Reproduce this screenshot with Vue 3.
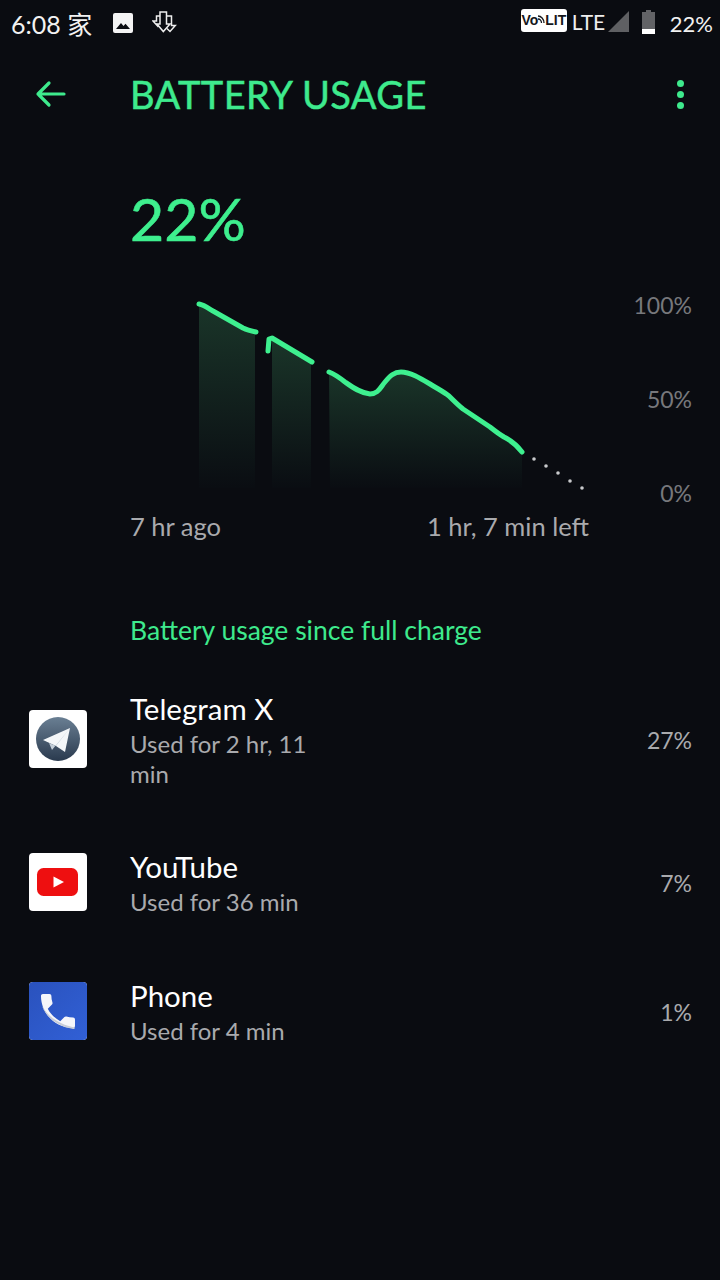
<script setup>
const apps = [
  { name: 'Telegram X', used: 'Used for 2 hr, 11 min', pct: '27%', icon: 'telegram', tall: true },
  { name: 'YouTube', used: 'Used for 36 min', pct: '7%', icon: 'youtube' },
  { name: 'Phone', used: 'Used for 4 min', pct: '1%', icon: 'phone' }
]
const seg3 = 'M329 371C334 373 340 377 345 381C352 386 360 392 370 393C378 393 380 387 385 381C390 375 394 371 401 371C410 371 420 377 430 383C438 388 444 391 449 395C454 400 458 404 463 408L490 426C495 430 499 433 504 436C510 439 516 443 522 451'
</script>

<template>
  <div class="screen">
    <header class="status">
      <div class="status-left">
        <span class="time">6:08 家</span>
        <svg class="s-img" width="22" height="22" viewBox="0 0 22 22">
          <rect x="1" y="1" width="20" height="20" rx="2" fill="#f4f4f4" />
          <path d="M4 17l5-6 2.500 3 2-2.200L18 17z" fill="#0b0d12" />
        </svg>
        <svg class="s-dl" width="25" height="22" viewBox="0 0 25 22" fill="none" stroke="#eee" stroke-width="1.500" stroke-linejoin="miter">
          <path d="M8 1h6.500v12h3.500L11.300 20.500 5 13h3z" />
          <path d="M8 5H4.500v5H1l5.500 6" />
          <path d="M14.500 5h5v9.500h3.800L18 20.500 15 17.500" />
        </svg>
      </div>
      <div class="status-right">
        <span class="volte">Vo<svg width="7" height="9" viewBox="0 0 7 9" fill="none" stroke="#15171b" stroke-width="1.300"><path d="M0 1c3 0 6 3 6 7M0 4c2 0 3.500 2 3.500 4" /></svg>LIT</span>
        <span class="lte">LTE</span>
        <svg class="s-sig" width="21" height="21" viewBox="0 0 21 21"><path d="M0 21L21 0v21z" fill="#5f6063" /></svg>
        <svg class="s-bat" width="13" height="24" viewBox="0 0 13 24">
          <path d="M4 0h5v2h4v22H0V2h4z" fill="#626366" />
          <rect y="19" width="13" height="5" fill="#fff" />
        </svg>
        <span class="s-pct">22%</span>
      </div>
    </header>

    <nav class="toolbar">
      <svg class="back" width="32" height="32" viewBox="0 0 32 32" fill="none" stroke="#3eea8d" stroke-width="3.200" stroke-linecap="round" stroke-linejoin="round">
        <path d="M3 16h26M14 5L3 16l11 11" />
      </svg>
      <h1 class="title">BATTERY USAGE</h1>
      <div class="dots"><i></i><i></i><i></i></div>
    </nav>

    <section class="summary">
      <div class="big">22%</div>
      <div class="chart-wrap">
        <svg class="chart" width="460" height="210" viewBox="130 290 460 210">
          <defs>
            <linearGradient id="fade" x1="0" y1="0" x2="0" y2="1">
              <stop offset="0" stop-color="#1a3529" />
              <stop offset="1" stop-color="#0a0d12" />
            </linearGradient>
          </defs>
          <path d="M199 304L213 310L243 327L255 331V487H199z" fill="url(#fade)" />
          <path d="M272 338L311 361V487H272z" fill="url(#fade)" />
          <path :d="seg3 + 'V487H330z'" fill="url(#fade)" />
          <g fill="none" stroke="#3ef08f" stroke-width="5" stroke-linecap="round" stroke-linejoin="round">
            <path d="M199 303C204 304 208 307 213 310L243 327C247 329 251 330 256 331" />
            <path d="M268 350L269 338L272 337L312 361" />
            <path :d="seg3" />
          </g>
          <g fill="#c9cacc">
            <circle cx="534" cy="458" r="1.800" /><circle cx="546" cy="465" r="1.800" /><circle cx="558" cy="472" r="1.800" /><circle cx="570" cy="480" r="1.800" /><circle cx="582" cy="487" r="1.800" />
          </g>
        </svg>
        <div class="axis"><span>100%</span><span>50%</span><span>0%</span></div>
      </div>
      <div class="range"><span>7 hr ago</span><span>1 hr, 7 min left</span></div>
    </section>

    <h2 class="section">Battery usage since full charge</h2>

    <section class="list">
      <div v-for="a in apps" :key="a.name" class="row" :class="{ tall: a.tall }">
        <div class="app-icon" :class="a.icon">
          <svg v-if="a.icon === 'telegram'" width="58" height="58" viewBox="0 0 58 58">
            <defs>
              <linearGradient id="tg" x1="0" y1="0" x2="0" y2="1">
                <stop offset="0" stop-color="#6a7f93" />
                <stop offset="1" stop-color="#2a3a4e" />
              </linearGradient>
            </defs>
            <circle cx="29" cy="29" r="22" fill="url(#tg)" />
            <path d="M14 30L41 18L36 42L27 36z" fill="#f4f7f9" />
            <path d="M20 33L27 36L41 18L23 40z" fill="#c3ced8" />
          </svg>
          <svg v-else-if="a.icon === 'youtube'" width="58" height="58" viewBox="0 0 58 58">
            <rect x="8" y="15" width="41" height="28" rx="6.500" fill="#ee0f10" />
            <path d="M24.500 23.500L35 29L24.500 34.500z" fill="#fff" />
          </svg>
          <svg v-else width="58" height="58" viewBox="0 0 58 58">
            <defs>
              <linearGradient id="ph" x1="0" y1="0" x2="1" y2="1">
                <stop offset="0" stop-color="#2a52bd" />
                <stop offset="1" stop-color="#3160d6" />
              </linearGradient>
            </defs>
            <rect width="58" height="58" fill="url(#ph)" />
            <path transform="translate(6.300 6.300) scale(1.890)" d="M6.620 10.790c1.440 2.830 3.760 5.140 6.590 6.590l2.200-2.200c.27-.27.67-.36 1.020-.24 1.120.37 2.330.57 3.570.57.550 0 1 .45 1 1V20c0 .55-.45 1-1 1-9.390 0-17-7.610-17-17 0-.55.45-1 1-1h3.500c.55 0 1 .45 1 1 0 1.250.2 2.450.57 3.570.11.350.03.740-.25 1.020l-2.200 2.200z" fill="#f5f6fa" />
            <path d="M13 24C17 35 28 44 44 47C45 47 46 46.500 46 45.500C32 43 20 36 13 24z" fill="#c8cdd8" />
          </svg>
        </div>
        <div class="text">
          <div class="name">{{ a.name }}</div>
          <div class="used">{{ a.used }}</div>
        </div>
        <div class="pct">{{ a.pct }}</div>
      </div>
    </section>
  </div>
</template>

<style>
html, body { margin: 0; background: #0a0c11; }
</style>

<style scoped>
.screen {
  width: 720px;
  height: 1280px;
  overflow: hidden;
  background: #0a0c11;
  font-family: Lato, "Noto Sans CJK SC", sans-serif;
  color: #fff;
}
.status {
  height: 46px;
  display: flex;
  align-items: center;
  justify-content: space-between;
  padding: 0 7px 0 11px;
}
.status-left, .status-right { display: flex; align-items: center; }
.time { font-size: 25px; color: #f2f2f2; width: 101px; white-space: nowrap; }
.s-img { margin-bottom: 1px; }
.s-dl { margin-left: 18px; margin-bottom: 2px; }
.volte {
  width: 46px; height: 23px;
  display: flex; align-items: center; justify-content: center;
  background: #fff; color: #15171b; border-radius: 3px;
  font: 800 14px/23px "Liberation Sans", sans-serif;
  white-space: nowrap; overflow: hidden;
  margin-bottom: 5px;
}
.volte svg { margin-bottom: 3px; }
.lte { font-size: 21px; color: #eee; margin-left: 5px; width: 31px; white-space: nowrap; margin-bottom: 4px; }
.s-sig { margin-left: 5px; margin-bottom: 3px; }
.s-bat { margin-left: 13px; margin-bottom: 3px; }
.s-pct { font-size: 22px; color: #f2f2f2; margin-left: 15px; }

.toolbar {
  height: 96px;
  display: flex;
  align-items: center;
  padding-left: 35px;
}
.title {
  margin: 0 0 0 63px;
  font-size: 38px;
  font-weight: 400;
  -webkit-text-stroke: .5px #3eea8d;
  color: #3eea8d;
  letter-spacing: .4px;
  white-space: nowrap;
}
.dots { margin-left: auto; margin-right: 36px; display: flex; flex-direction: column; gap: 4px; }
.dots i { width: 7px; height: 7px; border-radius: 50%; background: #3eea8d; display: block; }

.summary { padding-left: 130px; }
.big {
  margin-top: 44px;
  height: 66px;
  font-size: 59px;
  line-height: 66px;
  font-weight: 400;
  -webkit-text-stroke: .6px #3eef8e;
  color: #3eef8e;
}
.chart-wrap { display: flex; margin-top: 39px; height: 210px; }
.chart { display: block; flex: none; }
.axis {
  width: 102px;
  display: flex;
  flex-direction: column;
  align-items: flex-end;
  gap: 66px;
  font-size: 23px;
  line-height: 28px;
  color: #77787c;
}
.axis span { display: block; }
.range {
  width: 459px;
  margin-top: 10px;
  display: flex;
  justify-content: space-between;
  font-size: 25.500px;
  line-height: 30px;
  color: #a9aaad;
}
.section {
  margin: 73px 0 0 130px;
  font-size: 26.500px;
  line-height: 32px;
  font-weight: 400;
  color: #3eea8d;
  white-space: nowrap;
}
.list { margin-top: 14px; }
.row {
  height: 129px;
  display: flex;
  align-items: center;
  padding: 0 28px 0 29px;
}
.row.tall { height: 157px; }
.app-icon {
  width: 58px; height: 58px; flex: none;
  border-radius: 4px; overflow: hidden; background: #fff;
}
.app-icon svg { display: block; }
.text { margin-left: 43px; width: 200px; padding-top: 3px; }
.name { font-size: 29.500px; line-height: 36px; color: #fff; }
.used { font-size: 24px; line-height: 30px; margin-top: 2px; color: #a9aaad; }
.pct { margin-left: auto; padding-top: 2px; font-size: 23px; color: #a9aaad; }
</style>
